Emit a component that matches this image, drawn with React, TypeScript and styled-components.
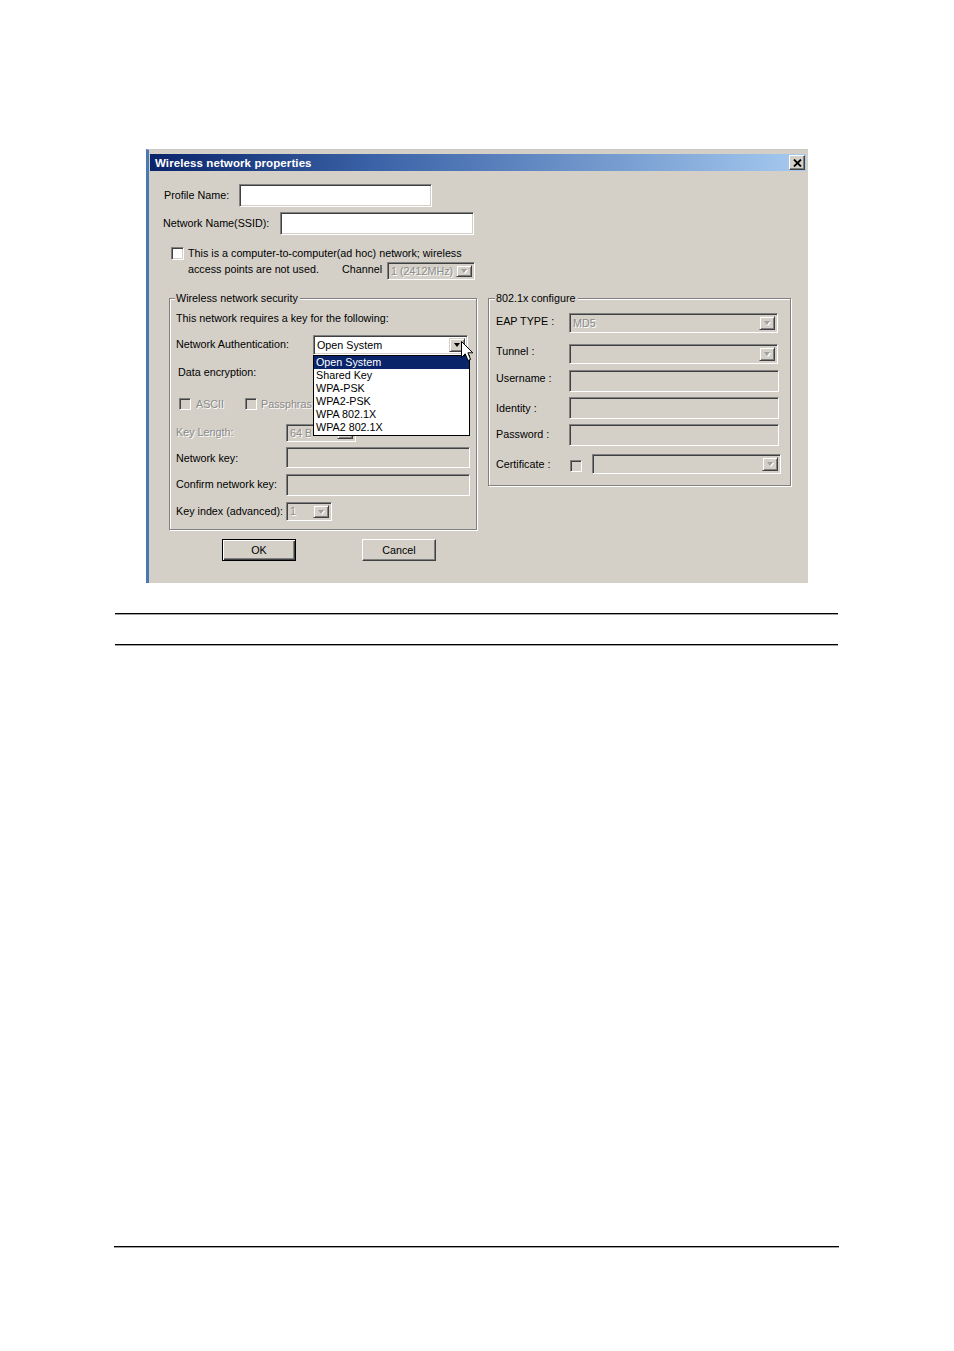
import React from 'react';
import styled, { createGlobalStyle, css } from 'styled-components';

const GlobalStyle = createGlobalStyle`
	html, body {
		margin: 0;
		padding: 0;
		background: #ffffff;
	}
	body {
		font-family: 'Liberation Sans', Arial, sans-serif;
	}
`;

const FACE = '#d4d0c8';

const Page = styled.div`
	width: 954px;
	height: 1351px;
	padding-top: 149px;
	box-sizing: border-box;
	overflow: hidden;
	background: #ffffff;
`;

const Dialog = styled.div`
	margin-left: 146px;
	width: 662px;
	height: 434px;
	box-sizing: border-box;
	background: ${FACE};
	border-left: 3px solid #4a78b5;
	border-top: 1px solid #c8c8c8;
	padding-top: 4px;
	font-size: 10.75px;
	color: #000;
`;

const TitleBar = styled.div`
	height: 17px;
	margin: 0 2px 0 1px;
	display: flex;
	align-items: center;
	justify-content: space-between;
	background: linear-gradient(to right, #0a246a 0%, #3c64a8 35%, #a6caf0 100%);
	padding-left: 5px;
	padding-right: 1px;
`;

const TitleText = styled.span`
	color: #ffffff;
	font-weight: bold;
	font-size: 11.5px;
	letter-spacing: 0.1px;
`;

const CloseButton = styled.div`
	width: 16px;
	height: 15px;
	box-sizing: border-box;
	background: ${FACE};
	border: 1px solid;
	border-color: #ffffff #404040 #404040 #ffffff;
	box-shadow: inset -1px -1px 0 #808080;
	display: flex;
	align-items: center;
	justify-content: center;
`;

const Body = styled.div`
	display: flex;
	flex-direction: column;
	padding-left: 15px;
`;

const Row = styled.div<{ $mt: number; $h?: number; $ml?: number }>`
	display: flex;
	align-items: center;
	margin-top: ${({ $mt }) => $mt}px;
	margin-left: ${({ $ml }) => $ml ?? 0}px;
	height: ${({ $h }) => ($h ? `${$h}px` : 'auto')};
`;

const Label = styled.span<{ $w?: number; $disabled?: boolean; $lift?: number; $clip?: number }>`
	flex: none;
	width: ${({ $w }) => ($w ? `${$w}px` : 'auto')};
	white-space: nowrap;
	line-height: 14px;
	margin-bottom: ${({ $lift }) => ($lift ?? 0) * 2}px;
	${({ $clip }) =>
		$clip &&
		css`
			max-width: ${$clip}px;
			overflow: hidden;
		`}
	${({ $disabled }) =>
		$disabled &&
		css`
			color: #8a8a8a;
			text-shadow: 1px 1px 0 #ffffff;
		`}
`;

const sunken = css`
	box-sizing: border-box;
	border: 1px solid;
	border-color: #808080 #ffffff #ffffff #808080;
	box-shadow: inset 1px 1px 0 #404040, inset -1px -1px 0 ${FACE};
`;

const TextBox = styled.div<{ $w: number; $h: number; $disabled?: boolean }>`
	${sunken};
	flex: none;
	width: ${({ $w }) => $w}px;
	height: ${({ $h }) => $h}px;
	background: ${({ $disabled }) => ($disabled ? FACE : '#ffffff')};
`;

const ComboFrame = styled.div<{ $w: number; $h: number; $disabled?: boolean; $ml?: number }>`
	${sunken};
	position: relative;
	flex: none;
	width: ${({ $w }) => $w}px;
	height: ${({ $h }) => $h}px;
	margin-left: ${({ $ml }) => $ml ?? 0}px;
	padding: 2px;
	display: flex;
	align-items: center;
	background: ${({ $disabled }) => ($disabled ? FACE : '#ffffff')};
`;

const ComboText = styled.span<{ $disabled?: boolean; $clip?: number }>`
	flex: 1;
	padding-left: 1px;
	white-space: nowrap;
	overflow: hidden;
	line-height: 13px;
	${({ $clip }) =>
		$clip &&
		css`
			flex: none;
			width: ${$clip}px;
			margin-right: auto;
		`}
	${({ $disabled }) =>
		$disabled &&
		css`
			color: #8c8c8c;
			text-shadow: 1px 1px 0 #ffffff;
		`}
`;

const ArrowButton = styled.div`
	flex: none;
	align-self: stretch;
	width: 16px;
	box-sizing: border-box;
	background: ${FACE};
	border: 1px solid;
	border-color: ${FACE} #404040 #404040 ${FACE};
	box-shadow: inset 1px 1px 0 #ffffff, inset -1px -1px 0 #808080;
	display: flex;
	align-items: center;
	justify-content: center;
`;

const Triangle = styled.div<{ $disabled?: boolean }>`
	width: 0;
	height: 0;
	border-left: 3.5px solid transparent;
	border-right: 3.5px solid transparent;
	border-top: 4px solid ${({ $disabled }) => ($disabled ? '#a0a0a0' : '#000000')};
	filter: ${({ $disabled }) => ($disabled ? 'drop-shadow(1px 1px 0 #ffffff)' : 'none')};
`;

const CheckBox = styled.div<{ $disabled?: boolean; $size?: number }>`
	${sunken};
	flex: none;
	width: ${({ $size }) => $size ?? 13}px;
	height: ${({ $size }) => $size ?? 13}px;
	background: ${({ $disabled }) => ($disabled ? FACE : '#ffffff')};
`;

const AdhocBlock = styled.div`
	display: flex;
	margin-top: 10px;
	margin-left: 7px;
`;

const AdhocCheck = styled(CheckBox)`
	margin-top: 2px;
`;

const AdhocText = styled.div`
	display: flex;
	flex-direction: column;
	margin-left: 4px;
`;

const AdhocLine = styled.div`
	height: 16px;
	line-height: 16px;
	white-space: nowrap;
`;

const AdhocLineTwo = styled.div`
	display: flex;
	align-items: flex-start;
	margin-top: 1px;
	height: 18px;
`;

const Groups = styled.div`
	display: flex;
	align-items: flex-start;
	gap: 11px;
	margin-top: 12px;
	margin-left: 5px;
`;

const GroupBox = styled.fieldset<{ $w: number; $pb: number; $pl: number }>`
	margin: 0;
	min-width: 0;
	width: ${({ $w }) => $w}px;
	box-sizing: border-box;
	border: 1px solid #808080;
	box-shadow: 1px 1px 0 #ffffff, inset 1px 1px 0 #ffffff;
	padding: 0 0 ${({ $pb }) => $pb}px ${({ $pl }) => $pl}px;
	display: flex;
	flex-direction: column;
`;

const Legend = styled.legend`
	margin-left: -1px;
	padding: 0 2px 0 1px;
	line-height: 13px;
	font-size: 10.75px;
	background: ${FACE};
`;

const ComboAnchor = styled.div`
	position: relative;
	flex: none;
`;

const DropList = styled.div`
	position: absolute;
	top: 100%;
	left: 0;
	width: 157px;
	box-sizing: border-box;
	border: 1px solid #000000;
	background: #ffffff;
	z-index: 5;
	padding-bottom: 1px;
`;

const DropItem = styled.div<{ $selected?: boolean }>`
	height: 13px;
	line-height: 13px;
	padding-left: 2px;
	white-space: nowrap;
	background: ${({ $selected }) => ($selected ? '#0a246a' : 'transparent')};
	color: ${({ $selected }) => ($selected ? '#ffffff' : '#000000')};
`;

const Pointer = styled.svg`
	position: absolute;
	left: 148px;
	top: 6px;
	z-index: 6;
`;

const CheckLabel = styled(Label)<{ $gap: number }>`
	margin-left: ${({ $gap }) => $gap}px;
`;

const CertCheck = styled(CheckBox)`
	margin-top: 4px;
`;

const ButtonRow = styled.div`
	display: flex;
	gap: 66px;
	margin-top: 9px;
	margin-left: 58px;
`;

const PushButton = styled.div<{ $default?: boolean }>`
	width: 74px;
	height: 22px;
	box-sizing: border-box;
	display: flex;
	align-items: center;
	justify-content: center;
	background: ${FACE};
	${({ $default }) =>
		$default
			? css`
					border: 1px solid #000000;
					box-shadow: inset 1px 1px 0 #ffffff, inset -1px -1px 0 #404040, inset -2px -2px 0 #808080;
			  `
			: css`
					border: 1px solid;
					border-color: #ffffff #404040 #404040 #ffffff;
					box-shadow: inset -1px -1px 0 #808080;
			  `}
`;

const Rule = styled.div<{ $mt: number; $ml: number; $w: number }>`
	margin-top: ${({ $mt }) => $mt}px;
	margin-left: ${({ $ml }) => $ml}px;
	width: ${({ $w }) => $w}px;
	height: 1px;
	background: #000000;
	box-shadow: 0 0.5px 0 #444;
`;

type ComboProps = {
	value?: string;
	w: number;
	h: number;
	disabled?: boolean;
	ml?: number;
	clip?: number;
};

function Combo({ value = '', w, h, disabled, ml, clip }: ComboProps) {
	return (
		<ComboFrame $w={w} $h={h} $disabled={disabled} $ml={ml}>
			<ComboText $disabled={disabled} $clip={clip}>
				{value}
			</ComboText>
			<ArrowButton>
				<Triangle $disabled={disabled} />
			</ArrowButton>
		</ComboFrame>
	);
}

const authOptions = ['Open System', 'Shared Key', 'WPA-PSK', 'WPA2-PSK', 'WPA 802.1X', 'WPA2 802.1X'];

export default function App() {
	return (
		<>
			<GlobalStyle />
			<Page>
				<Dialog>
					<TitleBar>
						<TitleText>Wireless network properties</TitleText>
						<CloseButton>
							<svg width="9" height="8" viewBox="0 0 9 8">
								<path d="M1 0.5 L8 7.5 M8 0.5 L1 7.5" stroke="#000" strokeWidth="1.8" />
							</svg>
						</CloseButton>
					</TitleBar>
					<Body>
						<Row $mt={13} $h={23}>
							<Label $w={75} $lift={1}>
								Profile Name:
							</Label>
							<TextBox $w={193} $h={23} />
						</Row>
						<Row $mt={5} $h={23} $ml={-1}>
							<Label $w={117} $lift={1}>
								Network Name(SSID):
							</Label>
							<TextBox $w={194} $h={23} />
						</Row>
						<AdhocBlock>
							<AdhocCheck />
							<AdhocText>
								<AdhocLine>This is a computer-to-computer(ad hoc) network; wireless</AdhocLine>
								<AdhocLineTwo>
									<Label $w={154}>access points are not used.</Label>
									<Label $w={45}>Channel</Label>
									<Combo value="1  (2412MHz)" w={88} h={18} disabled />
								</AdhocLineTwo>
							</AdhocText>
						</AdhocBlock>
						<Groups>
							<GroupBox $w={308} $pb={8} $pl={6}>
								<Legend>Wireless network security</Legend>
								<Row $mt={6}>
									<Label>This network requires a key for the following:</Label>
								</Row>
								<Row $mt={10} $h={20}>
									<Label $w={137} $lift={1}>
										Network Authentication:
									</Label>
									<ComboAnchor>
										<Combo value="Open System" w={155} h={20} />
										<DropList>
											{authOptions.map((opt, i) => (
												<DropItem key={opt} $selected={i === 0}>
													{opt}
												</DropItem>
											))}
										</DropList>
										<Pointer width="13" height="21" viewBox="0 0 13 21">
											<path
												d="M0.5 0.5 L0.5 16.5 L4.2 12.8 L7 19.5 L9.6 18.4 L6.9 11.8 L11.8 11.8 Z"
												fill="#ffffff"
												stroke="#000000"
												strokeWidth="1"
												strokeLinejoin="round"
											/>
										</Pointer>
									</ComboAnchor>
								</Row>
								<Row $mt={10} $ml={2}>
									<Label>Data encryption:</Label>
								</Row>
								<Row $mt={18} $h={14} $ml={3}>
									<CheckBox $disabled $size={12} />
									<CheckLabel $w={49} $gap={5} $disabled>
										ASCII
									</CheckLabel>
									<CheckBox $disabled $size={12} />
									<CheckLabel $gap={4} $clip={51} $disabled>
										Passphrase
									</CheckLabel>
								</Row>
								<Row $mt={13} $h={18}>
									<Label $w={110} $disabled $lift={1}>
										Key Length:
									</Label>
									<Combo value="64 Bits" w={70} h={18} disabled clip={21} />
								</Row>
								<Row $mt={5} $h={21}>
									<Label $w={110}>Network key:</Label>
									<TextBox $w={184} $h={21} $disabled />
								</Row>
								<Row $mt={6} $h={22}>
									<Label $w={110} $lift={1}>
										Confirm network key:
									</Label>
									<TextBox $w={184} $h={22} $disabled />
								</Row>
								<Row $mt={6} $h={19}>
									<Label $w={110} $lift={1}>
										Key index (advanced):
									</Label>
									<Combo value="1" w={46} h={19} disabled />
								</Row>
							</GroupBox>
							<GroupBox $w={303} $pb={11} $pl={7}>
								<Legend>802.1x configure</Legend>
								<Row $mt={8} $h={20}>
									<Label $w={73} $lift={2}>
										EAP TYPE :
									</Label>
									<Combo value="MD5" w={209} h={20} disabled />
								</Row>
								<Row $mt={11} $h={20}>
									<Label $w={73} $lift={3}>
										Tunnel :
									</Label>
									<Combo w={209} h={20} disabled />
								</Row>
								<Row $mt={6} $h={22}>
									<Label $w={73} $lift={3}>
										Username :
									</Label>
									<TextBox $w={210} $h={22} $disabled />
								</Row>
								<Row $mt={5} $h={22}>
									<Label $w={73}>Identity :</Label>
									<TextBox $w={210} $h={22} $disabled />
								</Row>
								<Row $mt={5} $h={22}>
									<Label $w={73} $lift={1}>
										Password :
									</Label>
									<TextBox $w={210} $h={22} $disabled />
								</Row>
								<Row $mt={8} $h={20}>
									<Label $w={74}>Certificate :</Label>
									<CertCheck $disabled $size={12} />
									<Combo w={189} h={20} disabled ml={10} />
								</Row>
							</GroupBox>
						</Groups>
						<ButtonRow>
							<PushButton $default>OK</PushButton>
							<PushButton>Cancel</PushButton>
						</ButtonRow>
					</Body>
				</Dialog>
				<Rule $mt={30} $ml={115} $w={723} />
				<Rule $mt={30} $ml={115} $w={723} />
				<Rule $mt={601} $ml={114} $w={725} />
			</Page>
		</>
	);
}
